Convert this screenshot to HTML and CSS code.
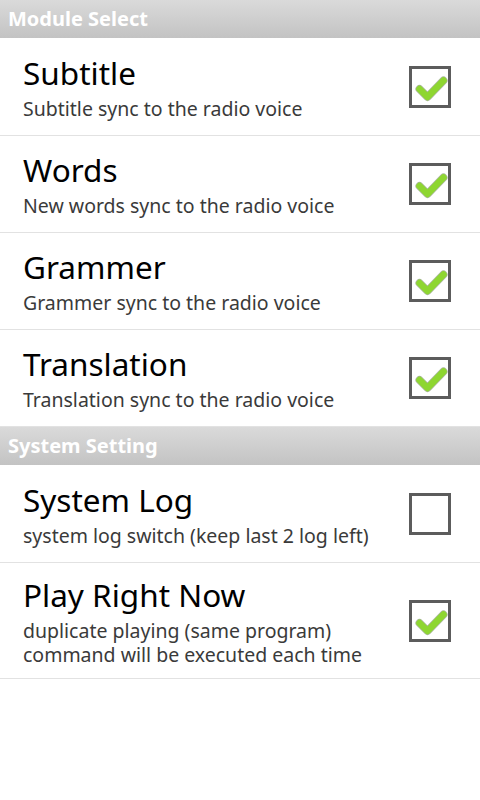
FILE: index.html
```html
<!DOCTYPE html>
<html>
<head>
<meta charset="utf-8">
<link rel="stylesheet" href="styles.css">
</head>
<body>
<div class="screen">
  <div class="section-head">Module Select</div>
  <div class="row">
    <div class="texts"><div class="title">Subtitle</div><div class="summary">Subtitle sync to the radio voice</div></div>
    <div class="box checked"><svg viewBox="0 0 42 42" class="tick"><polyline points="10.5,23 18.5,31 34.5,14.5" class="tick-edge"/><polyline points="10.5,23 18.5,31 34.5,14.5" class="tick-fill"/></svg></div>
  </div>
  <div class="row">
    <div class="texts"><div class="title">Words</div><div class="summary">New words sync to the radio voice</div></div>
    <div class="box checked"><svg viewBox="0 0 42 42" class="tick"><polyline points="10.5,23 18.5,31 34.5,14.5" class="tick-edge"/><polyline points="10.5,23 18.5,31 34.5,14.5" class="tick-fill"/></svg></div>
  </div>
  <div class="row">
    <div class="texts"><div class="title">Grammer</div><div class="summary">Grammer sync to the radio voice</div></div>
    <div class="box checked"><svg viewBox="0 0 42 42" class="tick"><polyline points="10.5,23 18.5,31 34.5,14.5" class="tick-edge"/><polyline points="10.5,23 18.5,31 34.5,14.5" class="tick-fill"/></svg></div>
  </div>
  <div class="row">
    <div class="texts"><div class="title">Translation</div><div class="summary">Translation sync to the radio voice</div></div>
    <div class="box checked"><svg viewBox="0 0 42 42" class="tick"><polyline points="10.5,23 18.5,31 34.5,14.5" class="tick-edge"/><polyline points="10.5,23 18.5,31 34.5,14.5" class="tick-fill"/></svg></div>
  </div>
  <div class="section-head">System Setting</div>
  <div class="row">
    <div class="texts"><div class="title">System Log</div><div class="summary">system log switch (keep last 2 log left)</div></div>
    <div class="box"></div>
  </div>
  <div class="row">
    <div class="texts"><div class="title">Play Right Now</div><div class="summary">duplicate playing (same program)<br>command will be executed each time</div></div>
    <div class="box checked"><svg viewBox="0 0 42 42" class="tick"><polyline points="10.5,23 18.5,31 34.5,14.5" class="tick-edge"/><polyline points="10.5,23 18.5,31 34.5,14.5" class="tick-fill"/></svg></div>
  </div>
</div>
</body>
</html>
```

FILE: styles.css
```css
html, body {
  margin: 0;
  padding: 0;
  background: #ffffff;
}
.screen {
  width: 480px;
  min-height: 800px;
  background: #ffffff;
  font-family: "Noto Sans", "Open Sans", sans-serif;
}
.section-head {
  height: 38px;
  box-sizing: border-box;
  margin-bottom: 1px;
  padding-left: 8px;
  background: linear-gradient(#dadada, #c3c3c3);
  color: #ffffff;
  font-weight: bold;
  font-size: 20px;
  line-height: 38px;
}
.row {
  display: flex;
  align-items: center;
  box-sizing: border-box;
  min-height: 97px;
  padding: 12px 29px 12px 23px;
  border-bottom: 1px solid #e2e2e2;
}
.texts {
  flex: 1;
}
.title {
  font-size: 31.5px;
  line-height: 40px;
  color: #000000;
}
.summary {
  margin-top: 4px;
  font-size: 19.5px;
  line-height: 23.5px;
  color: #3a3a3a;
}
.box {
  width: 42px;
  height: 42px;
  box-sizing: border-box;
  border: 3px solid #5c5c5c;
  flex: none;
  position: relative;
  background: #ffffff;
}
.tick {
  position: absolute;
  left: -3px;
  top: -3px;
  width: 42px;
  height: 42px;
}
.tick-edge {
  fill: none;
  stroke: #aab79e;
  stroke-width: 8;
  stroke-linecap: round;
  stroke-linejoin: round;
}
.tick-fill {
  fill: none;
  stroke: #8ed631;
  stroke-width: 6.5;
  stroke-linecap: round;
  stroke-linejoin: round;
}
```
